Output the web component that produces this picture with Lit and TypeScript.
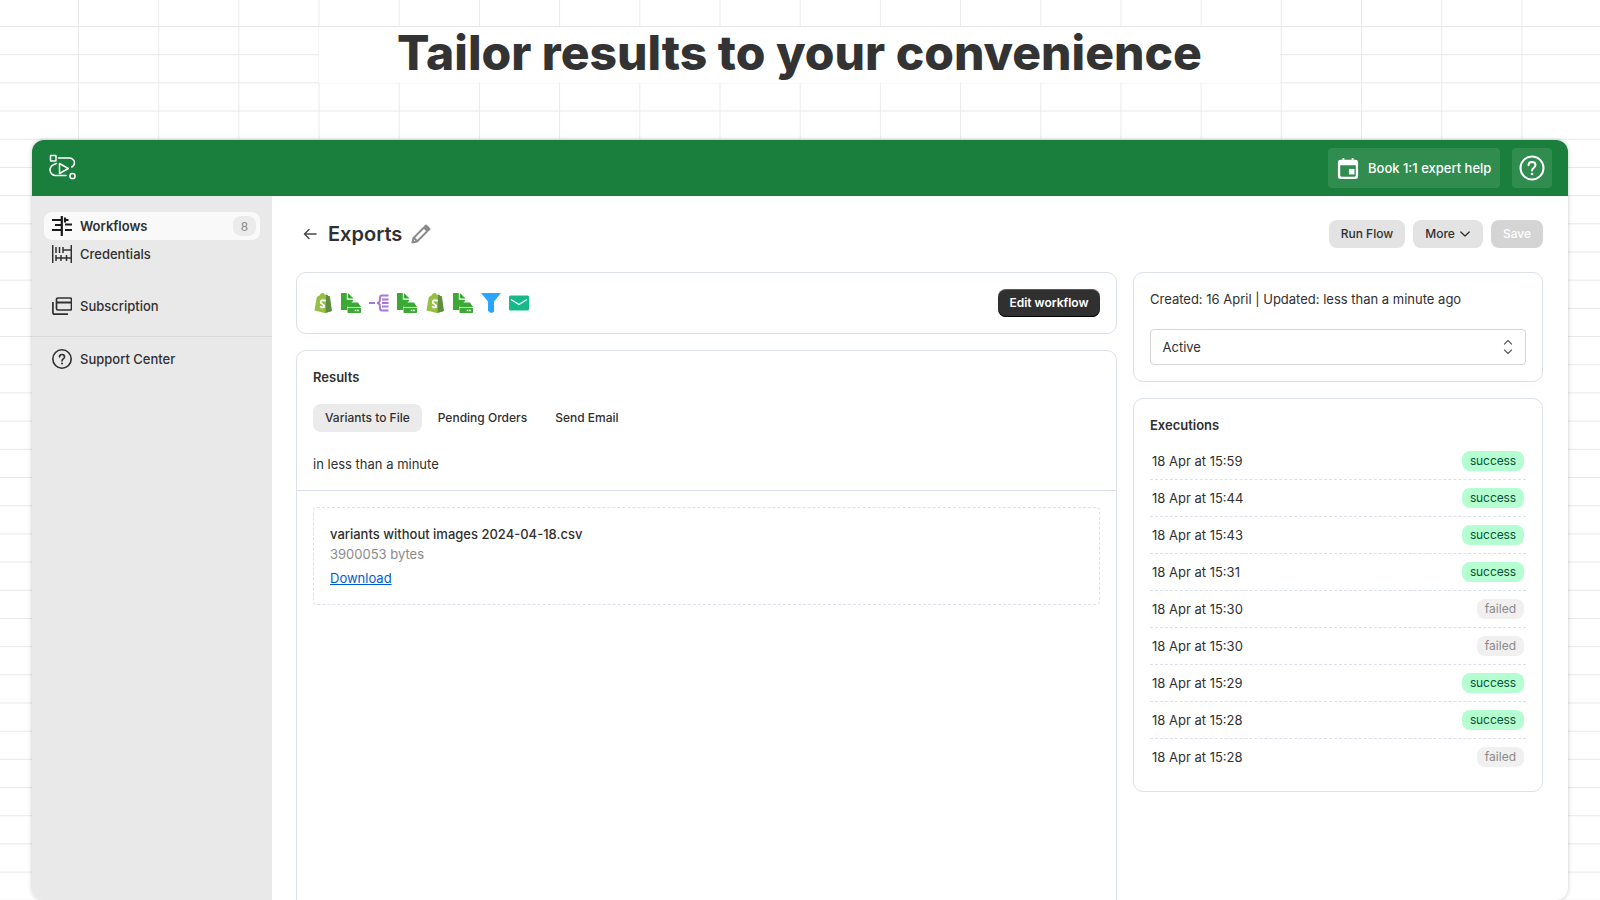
import { LitElement, html, css, svg } from "lit";
import { customElement } from "lit/decorators.js";

const shopify = svg`<svg class="wf" viewBox="0 0 20 20"><path d="M1.500 17.600 3.800 3.900C4.500 3.400 5.500 3.200 6.300 2.800 7.100 1.200 8.300.1 9.700 .1c1 0 1.600.7 2 1.700l1.800-.1 1.200 1.200 1.500.2 2.300 14.800-6.900 2z" fill="#95bf47"/><path d="M12.600 19.900 19 18.100 16.900 3.300l-1.500-.2-1.300-1.300-1 .1z" fill="#5e8e3e"/><path d="M12 7.700c-2.300-1-4.300-.2-4.300 1.500 0 2 3.500 2.200 3.500 4 0 1.500-2 1.500-3.600.5" fill="none" stroke="#fff" stroke-width="1.800" stroke-linecap="round"/></svg>`;
const sheet = svg`<svg class="wf" viewBox="0 0 20 20"><path d="M0 0H5.800V6.800H12V8L6 14V17H0z" fill="#3aaa35"/><path d="M7 0l5.500 5.500H7z" fill="#3aaa35"/><path d="M9 9.500h8L20 14H6.500z" fill="#3aaa35"/><rect x="6.500" y="14.800" width="13.500" height="5.200" rx=".8" fill="#3aaa35"/><circle cx="14.500" cy="17.400" r=".9" fill="#fff"/><circle cx="17" cy="17.400" r=".9" fill="#fff"/></svg>`;
const branch = svg`<svg class="wf" viewBox="0 0 20 20" fill="none" stroke="#a875e0" stroke-width="1.900"><path d="M0 10h6M19.500 2.500h-6.500c-1.500 0-2 .8-2 2v2c0 2-1 3.500-3 3.500 2 0 3 1.500 3 3.500v2c0 1.200.5 2 2 2h6.500M13 6.500h6.500M13 10h6.500M13 13.500h6.500"/></svg>`;
const funnel = svg`<svg class="wf" viewBox="0 0 20 20"><path d="M0 0h20l-7 8.500V19l-3 1-3-2V8.500z" fill="#2aa4ff"/></svg>`;
const mail = svg`<svg class="wf" viewBox="0 0 20 20"><rect y="2.500" width="20" height="15" rx="1.500" fill="#16b98a"/><path d="M2 6.500l8 5 8-5" fill="none" stroke="#fff" stroke-width="1.200"/></svg>`;

const runs: [string, boolean][] = [
  ["18 Apr at 15:59", true], ["18 Apr at 15:44", true], ["18 Apr at 15:43", true],
  ["18 Apr at 15:31", true], ["18 Apr at 15:30", false], ["18 Apr at 15:30", false],
  ["18 Apr at 15:29", true], ["18 Apr at 15:28", true], ["18 Apr at 15:28", false],
];

@customElement("app-root")
export class AppRoot extends LitElement {
  static styles = css`
    :host { display: block; font-family: Inter, "Liberation Sans", sans-serif; color: #303030; }
    * { box-sizing: border-box; }
    .page {
      height: 900px; overflow: hidden; background-color: #fff; padding-top: 27px;
      background-image: linear-gradient(#e8e8e8 1.4px, transparent 1.4px), linear-gradient(90deg, #ebebeb 1.2px, transparent 1.2px);
      background-size: 80.2px 28.2px; background-position: 78px 26px;
    }
    .title {
      width: 961px; height: 56px; margin: 0 0 57px 319px; background: #fff; text-align: center;
      font-size: 48px; font-weight: 800; line-height: 52px; color: #333; white-space: nowrap;
    }
    .app {
      height: 760px; margin: 0 32px; border-radius: 12px; overflow: hidden; background: #fff;
      display: flex; flex-direction: column; box-shadow: 0 0 4px rgba(0,0,0,.22);
    }
    .top { height: 56px; flex: none; background: #1a7f3c; display: flex; align-items: center; padding: 0 16px; gap: 12px; color: #fff; }
    .logo { margin-right: auto; display: block; }
    .tbtn { height: 40px; border-radius: 4px; background: rgba(255,255,255,.1); display: flex; align-items: center; justify-content: center; font-size: 13px; font-weight: 500; }
    .book { width: 172px; gap: 9px; padding-left: 9px; justify-content: flex-start; }
    .help { width: 40px; }
    .body { flex: 1; display: flex; min-height: 0; }
    .side { width: 240px; flex: none; background: #e9e9e9; padding-top: 16px; }
    .item { height: 28px; margin: 0 12px; padding: 0 4px 0 8px; display: flex; align-items: center; gap: 8px; border-radius: 8px; font-size: 13px; font-weight: 500; color: #303030; }
    .item.on { background: #f9f9f9; font-weight: 600; }
    .item svg { flex: none; }
    .count { margin-left: auto; width: 23px; height: 20px; background: #ebebeb; border-radius: 8px; color: #8a8a8a; font-size: 12px; font-weight: 400; display: flex; align-items: center; justify-content: center; }
    .sub { margin-top: 24px; }
    .rule { border-top: 1px solid #d9d9d9; margin-top: 16px; padding-top: 7px; }
    .sup { height: 30px; }
    .main { flex: 1; min-width: 0; padding: 24px 25px 0 24px; }
    .head { height: 28px; display: flex; align-items: center; }
    .back { margin: 0 10px 0 6px; display: block; }
    h1 { margin: 0 9px 0 0; font-size: 20px; font-weight: 600; line-height: 28px; }
    .acts { margin-left: auto; display: flex; gap: 8px; }
    .btn { height: 28px; padding: 0 12px 1px; background: #e3e3e3; border-radius: 8px; display: flex; align-items: center; gap: 4px; font-size: 12px; font-weight: 500; color: #303030; }
    .btn.off { background: #d4d4d4; color: #fff; font-weight: 550; }
    .cols { display: grid; grid-template-columns: 1fr 410px; gap: 16px; margin-top: 24px; align-items: start; }
    .col { display: flex; flex-direction: column; gap: 16px; }
    .card { background: #fff; border: 1px solid #dbe0ea; border-radius: 10px; }
    .flow { height: 62px; padding: 0 16px; display: flex; align-items: center; gap: 8px; }
    .wf { width: 20px; height: 20px; display: block; flex: none; }
    .edit { margin-left: auto; height: 28px; width: 102px; padding-bottom: 1px; background: #303030; color: #fff; border-radius: 8px; font-size: 12px; font-weight: 600; display: flex; align-items: center; justify-content: center; box-shadow: inset 0 1px 0 rgba(255,255,255,.2), inset 0 -1px 0 #000; }
    .res { height: 700px; padding-top: 16px; }
    .pad { padding: 0 16px; }
    h2 { margin: 0; font-size: 13px; font-weight: 600; line-height: 20px; }
    .tabs { display: flex; margin-top: 17px; gap: 4px; }
    .tab { height: 28px; padding: 0 12px 1px; display: flex; align-items: center; font-size: 12px; font-weight: 450; color: #303030; border-radius: 8px; }
    .tab.on { background: #ebebeb; }
    .when { font-size: 13px; line-height: 20px; margin-top: 22px; padding-bottom: 16px; border-bottom: 1px solid #dbe0ea; padding-left: 16px; }
    .file { margin: 16px 16px 0; height: 98px; border: 1px dashed #dbe0ea; border-radius: 4px; padding: 16px; font-size: 13px; line-height: 20px; }
    .fname { font-weight: 500; }
    .bytes { color: #8a8a8a; }
    .file a { display: block; margin-top: 4px; color: #005bd3; text-decoration: underline; }
    .info { height: 110px; padding: 16px; font-size: 13px; line-height: 20px; }
    .select { margin-top: 20px; height: 36px; border: 1px solid #d4d4d4; border-radius: 4px; padding: 0 12px 0 11.500px; display: flex; align-items: center; justify-content: space-between; }
    .exec { height: 394px; padding: 16px 16px 0; }
    .rows { margin-top: 8px; }
    .row { height: 37px; padding: 0 2px 1px; display: flex; align-items: center; justify-content: space-between; font-size: 13px; border-bottom: 1px dashed #dbe0ea; }
    .row:last-child { border-bottom: 0; }
    .tag { height: 20px; padding: 0 8px 1px; border-radius: 8px; font-size: 12px; display: flex; align-items: center; }
    .ok { background: #b4fed2; color: #0c5132; letter-spacing: -0.1px; }
    .bad { background: #f0f0f0; color: #8a8a8a; }
  `;

  render() {
    return html`<div class="page">
      <div class="title">Tailor results to your convenience</div>
      <div class="app">
        <header class="top">
          <svg class="logo" width="32" height="32" viewBox="0 0 32 32" fill="none" stroke="#fff" stroke-width="1.500" stroke-linecap="round" stroke-linejoin="round">
            <g transform="translate(0 2)">
              <rect x="2.500" y="1.500" width="5.500" height="5.500" rx=".5"/>
              <path d="M10.500 4H21c3 0 5.500 2 5.500 4.500 0 2-1 3.500-2.700 4.500"/>
              <path d="M8.500 9.500C5 10.500 2 12.500 2 16c0 3 2.500 5.500 5.500 5.500H18"/>
              <path d="M11.500 9.500v10l8.800-5z"/>
              <circle cx="24.500" cy="22" r="2.600"/>
            </g>
          </svg>
          <div class="tbtn book">
            <svg width="22" height="22" viewBox="0 0 24 24"><path fill-rule="evenodd" fill="#fff" d="M6 1h2v2h8V1h2v2h2a3 3 0 0 1 3 3v15a3 3 0 0 1-3 3H4a3 3 0 0 1-3-3V6a3 3 0 0 1 3-3h2zM3.500 9v11c0 .8.700 1.500 1.500 1.500h14c.8 0 1.500-.7 1.500-1.500V9z"/><rect x="13" y="13" width="6" height="6" fill="#fff"/></svg>
            <span>Book 1:1 expert help</span>
          </div>
          <div class="tbtn help">
            <svg width="26" height="26" viewBox="0 0 26 26" fill="none" stroke="#fff" stroke-width="2"><circle cx="13" cy="13" r="11.500"/><path d="M9.500 10.200c0-2 1.600-3.300 3.500-3.300s3.500 1.300 3.500 3.200c0 2.800-3.500 2.800-3.500 5.400" stroke-linecap="round"/><circle cx="13" cy="19" r="1.300" fill="#fff" stroke="none"/></svg>
          </div>
        </header>
        <div class="body">
          <nav class="side">
            <div class="item on">
              <svg width="20" height="20" viewBox="0 0 20 20" fill="none" stroke="#1a1a1a" stroke-width="2.200"><path d="M9.800 0v20M0 4h9M3 9h6M0 14h9M13 1.500v5M13 4h3.500M13 8.500h7M13 14h7"/></svg>
              <span>Workflows</span><span class="count">8</span>
            </div>
            <div class="item">
              <svg width="20" height="20" viewBox="0 0 20 20" fill="none" stroke="#303030" stroke-width="1.500"><path d="M.7 1v18M19.300 1v18M4 3v6M7.500 3v6M11 3v6M11 6h8M4 11v6M4 14h15M9 11v6M14.500 11v6"/></svg>
              <span>Credentials</span>
            </div>
            <div class="item sub">
              <svg width="20" height="20" viewBox="0 0 20 20" fill="none" stroke="#303030" stroke-width="1.700"><rect x="4.500" y="2" width="15" height="12" rx="1.500"/><path d="M4.500 6.500h15" stroke-width="2"/><path d="M.9 6v10.500c0 1 .7 1.700 1.700 1.700H16"/></svg>
              <span>Subscription</span>
            </div>
            <div class="rule">
              <div class="item sup">
                <svg width="20" height="20" viewBox="0 0 20 20" fill="none" stroke="#303030" stroke-width="1.600"><circle cx="10" cy="10" r="9.200"/><path d="M7.500 8c0-1.500 1.100-2.500 2.500-2.500s2.500 1 2.500 2.400c0 2-2.500 2-2.500 4" stroke-linecap="round"/><circle cx="10" cy="14.500" r="1" fill="#303030" stroke="none"/></svg>
                <span>Support Center</span>
              </div>
            </div>
          </nav>
          <main class="main">
            <div class="head">
              <svg class="back" width="16" height="16" viewBox="0 0 16 16" fill="none" stroke="#4a4a4a" stroke-width="1.500" stroke-linecap="round" stroke-linejoin="round"><path d="M14 8H2.500M7 3.500 2.500 8 7 12.500"/></svg>
              <h1>Exports</h1>
              <svg width="20" height="20" viewBox="0 0 20 20" fill="none" stroke="#8a8a8a" stroke-width="2" stroke-linejoin="round"><path d="M1.500 18.500 2.500 14 13 3.500l3.500 3.500L6 17.500z"/><path d="M3 14l3 3"/><path d="M15 1.500 18.500 5 17.500 6 14 2.500z" fill="#8a8a8a"/></svg>
              <div class="acts">
                <div class="btn">Run Flow</div>
                <div class="btn">More
                  <svg width="12" height="12" viewBox="0 0 12 12" fill="none" stroke="#303030" stroke-width="1.300" stroke-linecap="round" stroke-linejoin="round"><path d="M1.800 4 6 8l4.200-4"/></svg>
                </div>
                <div class="btn off">Save</div>
              </div>
            </div>
            <div class="cols">
              <div class="col">
                <div class="card flow">
                  ${shopify}${sheet}${branch}${sheet}${shopify}${sheet}${funnel}${mail}
                  <div class="edit">Edit workflow</div>
                </div>
                <div class="card res">
                  <div class="pad">
                    <h2>Results</h2>
                    <div class="tabs">
                      <div class="tab on">Variants to File</div>
                      <div class="tab">Pending Orders</div>
                      <div class="tab">Send Email</div>
                    </div>
                  </div>
                  <div class="when">in less than a minute</div>
                  <div class="file">
                    <div class="fname">variants without images 2024-04-18.csv</div>
                    <div class="bytes">3900053 bytes</div>
                    <a href="#">Download</a>
                  </div>
                </div>
              </div>
              <div class="col">
                <div class="card info">
                  <div>Created: 16 April | Updated: less than a minute ago</div>
                  <div class="select"><span>Active</span>
                    <svg width="10" height="16" viewBox="0 0 10 16" fill="none" stroke="#616161" stroke-width="1.200" stroke-linecap="round" stroke-linejoin="round"><path d="M1.500 5 5 1.500 8.500 5M1.500 11 5 14.500 8.500 11"/></svg>
                  </div>
                </div>
                <div class="card exec">
                  <h2>Executions</h2>
                  <div class="rows">
                    ${runs.map(([t, ok]) => html`<div class="row"><span>${t}</span><span class="tag ${ok ? "ok" : "bad"}">${ok ? "success" : "failed"}</span></div>`)}
                  </div>
                </div>
              </div>
            </div>
          </main>
        </div>
      </div>
    </div>`;
  }
}
